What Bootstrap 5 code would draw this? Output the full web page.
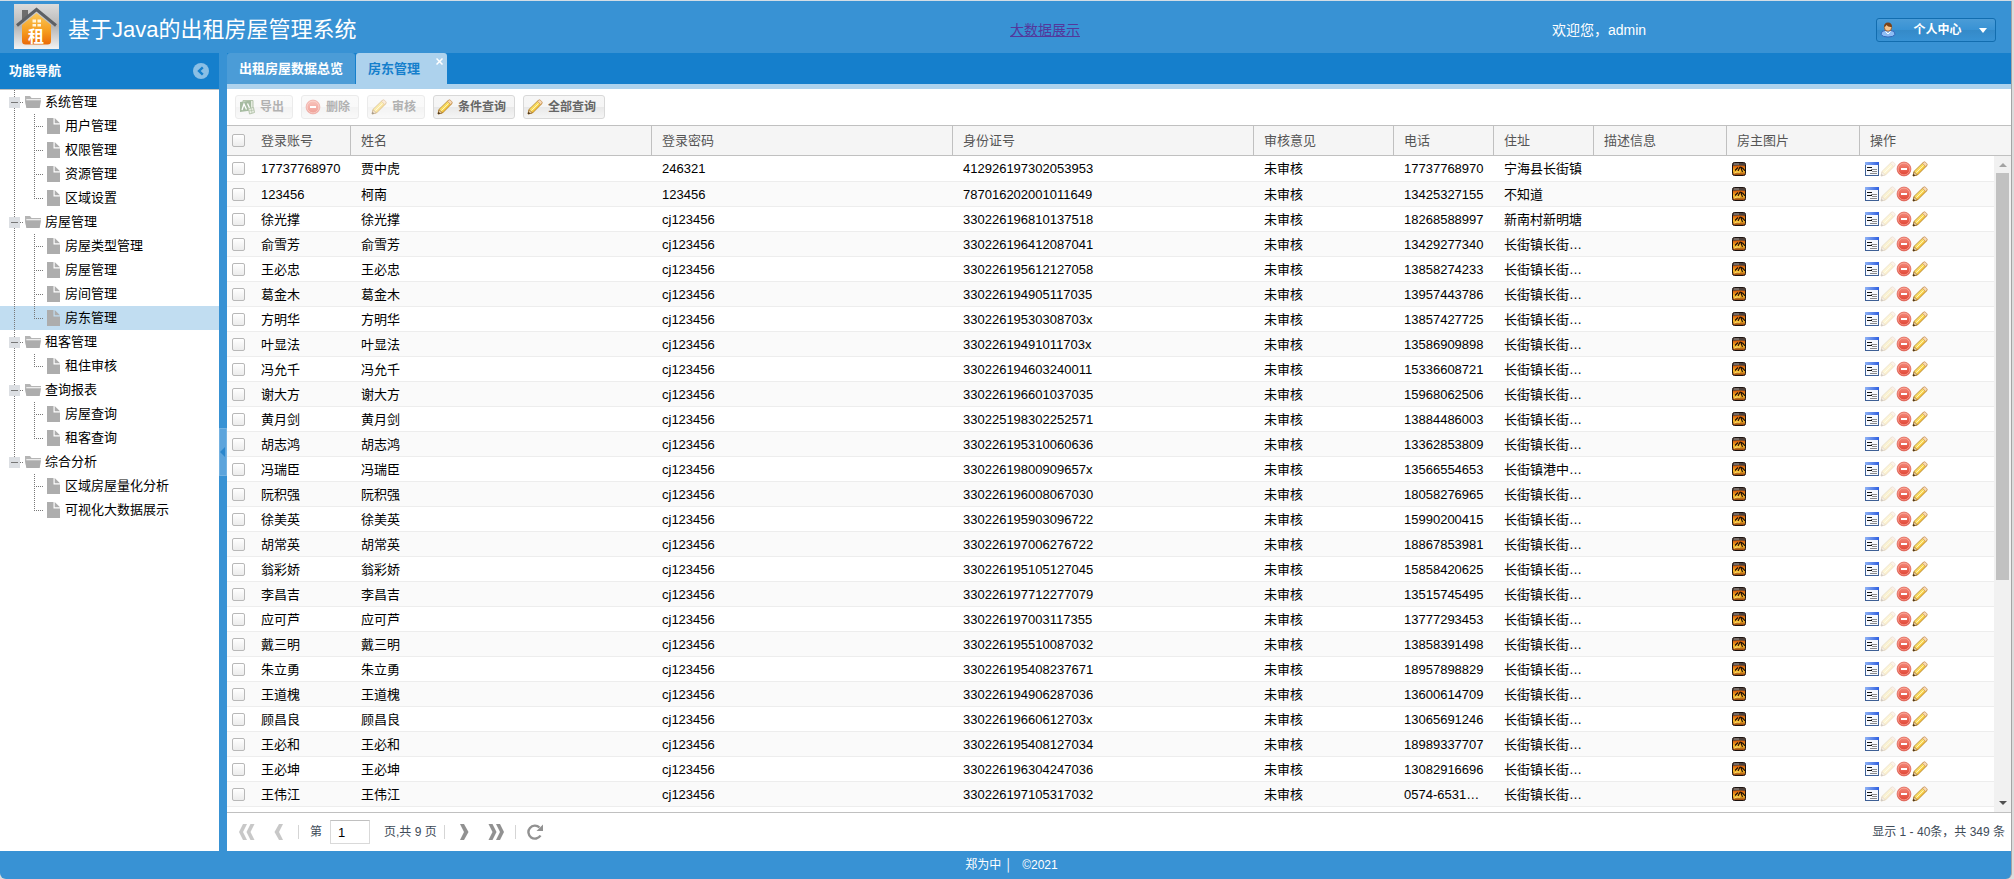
<!DOCTYPE html>
<html lang="zh-CN">
<head>
<meta charset="utf-8">
<meta name="viewport" content="width=device-width, initial-scale=1">
<title>基于Java的出租房屋管理系统</title>
<link href="https://cdn.jsdelivr.net/npm/bootstrap@5.3.0/dist/css/bootstrap.min.css" rel="stylesheet">
<style>
  :root { --base: #3892d4; --dark: #157fcc; --pale: #add2ed; --line: #c0c0c0; }
  body { font: 13px/16px "Liberation Sans", "Noto Sans CJK SC", sans-serif; color: #000; background: #dcdcdc; }
  .frame { border-top: 1px solid #d3dde5; padding-right: 2px; }
  .viewport { background: var(--base); border-right: 1px solid #a5a5a5; border-radius: 0 0 6px 6px; }

  .topbar { height: 52px; padding: 6px 15px 0 14px; color: #fff; font-size: 14px; }
  .topbar h1 { font-size: 22px; line-height: 26px; }
  .brand { gap: 9px; }
  .brand svg { margin-bottom: 7px; }
  .slot-link { width: 542px; }
  .slot-link a { color: #54389c; text-decoration-thickness: 1px; }
  .slot-user { width: 324px; }
  .btn-user { width: 120px; height: 24px; padding: 0 8px 0 3px; border: 1px solid #126daf; border-radius: 3px; color: #fff; font: bold 12px/16px "Liberation Sans", "Noto Sans CJK SC", sans-serif; background: linear-gradient(#4b9cd7, #3892d4 50%, #358ac8 51%, #3892d4); }

  .sidenav { width: 219px; }
  .sidenav-head { height: 37px; padding: 0 10px 0 9px; background: var(--dark); color: #fff; border-bottom: 1px solid var(--line); }
  .sidenav-head h2 { font-size: 13px; line-height: 16px; font-weight: bold; }
  .tree, .tree ul { list-style: none; margin: 0; padding: 0; }
  .tree a { display: flex; align-items: center; height: 24px; color: #000; text-decoration: none; }
  .tree .current { background: #c1ddf1; }
  .dots { stroke: #777; stroke-dasharray: 1 1; fill: none; shape-rendering: crispEdges; }
  .splitter { width: 8px; }
  .splitter button { width: 8px; height: 48px; border: 1px solid #74b2e1; background: #5ca4dc; }

  .tabbar { height: 31px; background: var(--dark); }
  .page-tab { height: 31px; padding: 0 12px; margin-right: 1px; border: 0; border-radius: 3px 3px 0 0; background: #4b9cd7; color: #fff; font-weight: bold; line-height: 30px; }
  .page-tab.current { position: relative; background: var(--pale); color: var(--dark); padding-right: 27px; }
  .tab-x { position: absolute; top: 5px; right: 4px; }
  .tab-strip { height: 5px; background: var(--pale); }
  .tools { height: 36px; padding: 0 8px; gap: 8px; }
  .tool { display: inline-flex; align-items: center; gap: 5px; height: 24px; padding: 0 8px 0 3px; border: 1px solid #d8d8d8; border-radius: 3px; color: #666; font-size: 12px; line-height: 16px; font-weight: bold; background: linear-gradient(#f6f6f6, #f5f5f5 50%, #e8e8e8 51%, #f5f5f5); }
  .tool:disabled { opacity: .5; border-color: #d8d8d8; color: #666; }

  .grid-table { table-layout: fixed; border-collapse: separate; border-spacing: 0; }
  .grid-table > thead > tr > th { height: 31px; padding: 0 9px 0 10px; border: solid var(--line); border-width: 1px 1px 1px 0; background: #f5f5f5; color: #555; font-weight: normal; vertical-align: middle; }
  .grid-table > tbody > tr > td { height: 25px; padding: 1px 10px 0; border-bottom: 1px solid #ededed; white-space: nowrap; overflow: hidden; vertical-align: middle; box-shadow: none; color: #000; background: #fff; }
  .grid-table > tbody > tr:nth-child(even) > td { background: #fafafa; }
  .grid-table > tbody > tr:first-child > td { height: 26px; }
  .grid-table > thead > tr > th.pick { border-right: 0; }
  .grid-table > * > tr > .pick { padding: 0 0 0 5px; }
  .grid-table > thead > tr > th:last-child { border-right: 0; }
  .grid-table > tbody > tr > td.pics { padding: 0 0 0 4px; }
  .pics a { color: inherit; }
  .c-pick { width: 24px; } .c-100 { width: 100px; } .c-140 { width: 140px; } .c-133 { width: 133px; } .c-ops { width: 151px; }
  .tick { appearance: none; display: block; width: 13px; height: 13px; margin: 0; border: 1px solid #b8b8b8; border-radius: 2px; background: linear-gradient(#fff, #ececec); }
  .vbar { position: absolute; top: 31px; right: 0; bottom: 0; width: 17px; background: #f1f1f1; }
  .vbar-thumb { width: 13px; height: 62%; margin-bottom: auto; background: #c1c1c1; }

  .pager { height: 39px; padding: 0 6px 0 8px; border-top: 1px solid var(--line); font-size: 12px; color: #404b58; }
  .pager .icon-btn { display: flex; width: 24px; height: 24px; padding: 4px; border: 0; background: none; color: #919191; }
  .pager .icon-btn:disabled { color: #c8c8c8; opacity: 1; }
  .pager .rule { width: 1px; height: 14px; margin: 0 7px; background: #d5d5d5; }
  .pager input { width: 40px; height: 24px; padding: 0 7px; margin: 0 14px 0 8px; border: 1px solid var(--line); border-color: #c0c0c0 #d9d9d9 #d9d9d9; border-radius: 0; font-size: 13px; color: #000; }
  .foot { height: 28px; color: #fff; font-size: 12px; padding-left: 12px; }
  svg { display: block; flex: none; }
</style>
</head>
<body>
<svg width="0" height="0" class="position-absolute" aria-hidden="true">
  <defs>
    <linearGradient id="gPen" x1="0" y1="0" x2="1" y2="1"><stop offset=".3" stop-color="#fff27a"/><stop offset=".7" stop-color="#efb426"/></linearGradient>
    <linearGradient id="gRed" x1="0" y1="0" x2="0" y2="1"><stop offset="0" stop-color="#f58d7e"/><stop offset="1" stop-color="#e0402f"/></linearGradient>
    <linearGradient id="gWin" x1="0" y1="0" x2="1" y2="0"><stop offset="0" stop-color="#8fb2f5"/><stop offset="1" stop-color="#2f5fe0"/></linearGradient>
    <linearGradient id="gFire" x1="0" y1="0" x2="0" y2="1"><stop offset="0" stop-color="#2a1d1a"/><stop offset=".3" stop-color="#d9640c"/><stop offset=".65" stop-color="#ffc22e"/><stop offset="1" stop-color="#8a3006"/></linearGradient>
    <linearGradient id="gLogo" x1="0" y1="0" x2="0" y2="1"><stop offset="0" stop-color="#dcdcdc"/><stop offset=".5" stop-color="#b5b5b5"/><stop offset="1" stop-color="#f3f3f3"/></linearGradient>
    <linearGradient id="gHouse" x1="0" y1="0" x2="0" y2="1"><stop offset="0" stop-color="#fbc95a"/><stop offset=".6" stop-color="#f59a1c"/><stop offset="1" stop-color="#ea6a08"/></linearGradient>
    <symbol id="i-pen" viewBox="0 0 16 16">
      <path d="M1 15l1-4.600L11 1.700q1-1 2-.2l1.600 1.600q.7 1-.1 1.900L5.500 14z" fill="url(#gPen)" stroke="#b07a22" stroke-width=".8"/>
      <path d="M10.500 2.300L11.600 1.200q1-.8 2 .1l1.100 1.200q.9 1 0 2l-1.100 1z" fill="#f9d9b4" stroke="#c08a50" stroke-width=".6"/>
      <path d="M4.300 11.800l7.400-7.300" stroke="#fffbd0" stroke-width="1"/>
      <path d="M2.200 10.800l3 3L1 15z" fill="#f3d8ac" stroke="#8a5a20" stroke-width=".6"/>
      <path d="M1 15l.5-2.200 1.800 1.700z" fill="#332415"/>
    </symbol>
    <symbol id="i-minus" viewBox="0 0 16 16">
      <circle cx="8" cy="8" r="6.900" fill="url(#gRed)" stroke="#dd5f53" stroke-width=".8"/>
      <circle cx="8" cy="8" r="5.900" fill="none" stroke="#f9b4a8" stroke-width=".7"/>
      <rect x="5" y="7" width="6" height="2" fill="#fff"/>
    </symbol>
    <symbol id="i-form" viewBox="0 0 16 16">
      <rect x="1.500" y="2.500" width="13" height="12" fill="#f7f9fe" stroke="#3d5f95"/>
      <path d="M1 1h14v3H1z" fill="url(#gWin)"/>
      <g shape-rendering="crispEdges"><path d="M3 6.500h5M3 9.500h5" stroke="#111"/><path d="M7 8.500h6M8 10.500h5M6 12.500h7" stroke="#8a8a8a"/></g>
    </symbol>
    <symbol id="i-photo" viewBox="0 0 16 16">
      <rect x="1.500" y="1.500" width="13" height="13" rx="2" fill="url(#gFire)" stroke="#1b1210"/>
      <path d="M2 2.500q6-1 12 0v2.300q-6-1.300-12 0z" fill="#4b4441"/>
      <path d="M3 3h5" stroke="#b5aca6" stroke-width=".8"/>
      <path d="M4 9.500l3-3M7 10L9 6M9 6q3 .5 5 4M10 7l1.500 4" stroke="#1b0d06" stroke-width="1.100" fill="none"/>
      <path d="M3 12.200q3-2 6-1" stroke="#ffe368" stroke-width="1" fill="none"/>
    </symbol>
    <symbol id="i-excel" viewBox="0 0 16 16">
      <path d="M4 1.500h10v10H4z" fill="#cfdcc3" stroke="#6d8b5c"/>
      <path d="M1 3l11-1.500v10L1 13z" fill="#4f7a45"/>
      <path d="M3 11l2-6 2.500 5.500M8.500 4.500L11 10" stroke="#fff" stroke-width="1.300" fill="none"/>
      <path d="M9.500 9.500l5-1 1 5-5 1.500z" fill="#dbe5d0" stroke="#6d8b5c"/>
      <path d="M10 12l5-1M12 9l1 5" stroke="#6d8b5c" stroke-width=".8"/>
    </symbol>
    <symbol id="i-folder" viewBox="0 0 16 12"><path d="M0 0h5l1.500 2H16v1.300H1.300v8L0 3.500z" fill="#b5b5b5"/><path d="M0 4.300h16L14.700 12H1.300z" fill="#adadad"/></symbol>
    <symbol id="i-file" viewBox="0 0 13 16"><path d="M0 0h6.500v6.500H13V16H0z" fill="#adadad"/><path d="M7.700 0L13 5.300H7.700z" fill="#adadad"/></symbol>
    <symbol id="t-group" viewBox="0 0 45 24">
      <path class="dots" d="M14.500 0v24M20 12.500h4"/>
      <rect x="9" y="7" width="11" height="11" fill="#dcdfe3"/><path d="M11 12.500h7" stroke="#777"/>
      <use href="#i-folder" x="25" y="6" width="16" height="12"/>
    </symbol>
    <symbol id="t-group-end" viewBox="0 0 45 24">
      <path class="dots" d="M14.500 0v12M20 12.500h4"/>
      <rect x="9" y="7" width="11" height="11" fill="#dcdfe3"/><path d="M11 12.500h7" stroke="#777"/>
      <use href="#i-folder" x="25" y="6" width="16" height="12"/>
    </symbol>
    <symbol id="t-item" viewBox="0 0 65 24"><path class="dots" d="M14.500 0v24M34.500 0v24M36 12.500h7"/><use href="#i-file" x="47" y="4" width="13" height="16"/></symbol>
    <symbol id="t-item-end" viewBox="0 0 65 24"><path class="dots" d="M14.500 0v24M34.500 0v13M36 12.500h7"/><use href="#i-file" x="47" y="4" width="13" height="16"/></symbol>
    <symbol id="t-tail" viewBox="0 0 65 24"><path class="dots" d="M34.500 0v24M36 12.500h7"/><use href="#i-file" x="47" y="4" width="13" height="16"/></symbol>
    <symbol id="t-tail-end" viewBox="0 0 65 24"><path class="dots" d="M34.500 0v13M36 12.500h7"/><use href="#i-file" x="47" y="4" width="13" height="16"/></symbol>
  </defs>
</svg>

<div class="frame vh-100">
<div class="viewport h-100 d-flex flex-column overflow-hidden">
  <header class="topbar d-flex align-items-center">
    <div class="brand d-flex align-items-center flex-grow-1">
      <svg width="45" height="45" viewBox="0 0 45 45" role="img" aria-label="租">
        <rect width="45" height="45" fill="url(#gLogo)"/>
        <path d="M8 6h6v7l-6 5z" fill="#6d6d6d"/>
        <path d="M8 21L22.500 9 37 21v16q0 3.500-3.500 3.500h-22Q8 40.500 8 37z" fill="url(#gHouse)"/>
        <path d="M3 21.500L22.500 5.500 42 21.500" fill="none" stroke="#5d6064" stroke-width="3" stroke-linejoin="miter"/>
        <path d="M18.500 15.500h3.500v3h-3.500zM23.500 15.500H27v3h-3.500zM18.500 20h3.500v2.500h-3.500zM23.500 20H27v2.500h-3.500z" fill="#fff6df"/>
        <text x="22" y="38" font-size="16" font-weight="bold" fill="#fff" text-anchor="middle">租</text>
      </svg>
      <h1 class="m-0 fw-normal">基于Java的出租房屋管理系统</h1>
    </div>
    <div class="slot-link"><a href="#">大数据展示</a></div>
    <div class="slot-user">欢迎您，admin</div>
    <button type="button" class="btn btn-user d-flex align-items-center justify-content-between">
      <svg width="16" height="16" viewBox="0 0 16 16">
        <path d="M1 12.500Q1 8.500 5 8.500h6q4 0 4 4-1.500 2.500-7 2.500T1 12.500z" fill="#8dbdf5" stroke="#2f62b5" stroke-width=".9"/>
        <path d="M5.500 9.500L8 12l2.500-2.500" stroke="#fff" fill="none"/>
        <circle cx="8" cy="5.500" r="3.700" fill="#f5c48d" stroke="#8a5122" stroke-width=".8"/>
        <path d="M4 5q0-4.500 4-4.500T12 5q-4 .5-5.500-2Q6 4.500 4 5z" fill="#7a4319"/>
      </svg>
      <span>个人中心</span>
      <svg width="8" height="5" viewBox="0 0 8 5"><path d="M0 0h8L4 5z" fill="#fff"/></svg>
    </button>
  </header>

  <div class="d-flex flex-grow-1 overflow-hidden">
    <nav class="sidenav flex-shrink-0 bg-white" aria-label="功能导航">
      <div class="sidenav-head d-flex align-items-center justify-content-between">
        <h2 class="m-0">功能导航</h2>
        <button type="button" class="btn p-0 border-0" aria-label="收起">
          <svg width="16" height="16" viewBox="0 0 16 16"><circle cx="8" cy="8" r="8" fill="#8abfe5"/><path d="M9.800 4.300L6 8l3.800 3.700" fill="none" stroke="#157fcc" stroke-width="2.400"/></svg>
        </button>
      </div>
      <ul class="tree">
        <li><a href="#"><svg width="45" height="24"><use href="#t-group"/></svg>系统管理</a>
          <ul>
            <li><a href="#"><svg width="65" height="24"><use href="#t-item"/></svg>用户管理</a></li>
            <li><a href="#"><svg width="65" height="24"><use href="#t-item"/></svg>权限管理</a></li>
            <li><a href="#"><svg width="65" height="24"><use href="#t-item"/></svg>资源管理</a></li>
            <li><a href="#"><svg width="65" height="24"><use href="#t-item-end"/></svg>区域设置</a></li>
          </ul>
        </li>
        <li><a href="#"><svg width="45" height="24"><use href="#t-group"/></svg>房屋管理</a>
          <ul>
            <li><a href="#"><svg width="65" height="24"><use href="#t-item"/></svg>房屋类型管理</a></li>
            <li><a href="#"><svg width="65" height="24"><use href="#t-item"/></svg>房屋管理</a></li>
            <li><a href="#"><svg width="65" height="24"><use href="#t-item"/></svg>房间管理</a></li>
            <li><a href="#" class="current"><svg width="65" height="24"><use href="#t-item-end"/></svg>房东管理</a></li>
          </ul>
        </li>
        <li><a href="#"><svg width="45" height="24"><use href="#t-group"/></svg>租客管理</a>
          <ul>
            <li><a href="#"><svg width="65" height="24"><use href="#t-item-end"/></svg>租住审核</a></li>
          </ul>
        </li>
        <li><a href="#"><svg width="45" height="24"><use href="#t-group"/></svg>查询报表</a>
          <ul>
            <li><a href="#"><svg width="65" height="24"><use href="#t-item"/></svg>房屋查询</a></li>
            <li><a href="#"><svg width="65" height="24"><use href="#t-item-end"/></svg>租客查询</a></li>
          </ul>
        </li>
        <li><a href="#"><svg width="45" height="24"><use href="#t-group-end"/></svg>综合分析</a>
          <ul>
            <li><a href="#"><svg width="65" height="24"><use href="#t-tail"/></svg>区域房屋量化分析</a></li>
            <li><a href="#"><svg width="65" height="24"><use href="#t-tail-end"/></svg>可视化大数据展示</a></li>
          </ul>
        </li>
      </ul>
    </nav>

    <div class="splitter flex-shrink-0 d-flex align-items-center">
      <button type="button" class="p-0" aria-label="收起导航"><svg width="6" height="10" viewBox="0 0 6 10"><path d="M5 0v10L0 5z" fill="#2a86cc"/></svg></button>
    </div>

    <main class="flex-grow-1 d-flex flex-column bg-white overflow-hidden">
      <div class="tabbar d-flex">
        <button type="button" class="page-tab">出租房屋数据总览</button>
        <button type="button" class="page-tab current">房东管理<svg class="tab-x" width="7" height="7" viewBox="0 0 7 7"><path d="M.5.500l6 6M6.500.500l-6 6" stroke="#fff" stroke-width="1.500"/></svg></button>
      </div>
      <div class="tab-strip"></div>
      <div class="tools d-flex align-items-center">
        <button type="button" class="tool" disabled><svg width="16" height="16"><use href="#i-excel"/></svg>导出</button>
        <button type="button" class="tool" disabled><svg width="16" height="16"><use href="#i-minus"/></svg>删除</button>
        <button type="button" class="tool" disabled><svg width="16" height="16"><use href="#i-pen"/></svg>审核</button>
        <button type="button" class="tool"><svg width="16" height="16"><use href="#i-pen"/></svg>条件查询</button>
        <button type="button" class="tool"><svg width="16" height="16"><use href="#i-pen"/></svg>全部查询</button>
      </div>

      <div class="position-relative flex-grow-1 overflow-hidden">
        <table class="table grid-table mb-0">
          <colgroup><col class="c-pick"><col class="c-100"><col><col><col><col class="c-140"><col class="c-100"><col class="c-100"><col class="c-133"><col class="c-133"><col class="c-ops"></colgroup>
          <thead>
            <tr><th class="pick"><input type="checkbox" class="tick" aria-label="全选"></th><th>登录账号</th><th>姓名</th><th>登录密码</th><th>身份证号</th><th>审核意见</th><th>电话</th><th>住址</th><th>描述信息</th><th>房主图片</th><th>操作</th></tr>
          </thead>
          <tbody id="owners"></tbody>
        </table>
        <div class="vbar d-flex flex-column align-items-center">
          <svg width="17" height="17" viewBox="0 0 17 17"><path d="M5 11h8L9 7z" fill="#a3a3a3"/></svg>
          <div class="vbar-thumb"></div>
          <svg width="17" height="17" viewBox="0 0 17 17"><path d="M5 6h8l-4 4z" fill="#505050"/></svg>
        </div>
      </div>

      <div class="pager d-flex align-items-center flex-shrink-0">
        <button type="button" class="icon-btn" disabled aria-label="首页"><svg width="16" height="16" viewBox="0 0 16 16"><path d="M8 0L4 8l4 8H4L0 8l4-8zM15.500 0l-4 8 4 8h-4l-4-8 4-8z" fill="currentColor"/></svg></button>
        <button type="button" class="icon-btn ms-2" disabled aria-label="上一页"><svg width="16" height="16" viewBox="0 0 16 16"><path d="M12 0L8 8l4 8H8L3.500 8 8 0z" fill="currentColor"/></svg></button>
        <span class="rule"></span>
        <label for="page" class="ms-1">第</label>
        <input type="text" id="page" value="1">
        <span>页,共 9 页</span>
        <span class="rule"></span>
        <button type="button" class="icon-btn" aria-label="下一页"><svg width="16" height="16" viewBox="0 0 16 16"><path d="M4 0l4 8-4 8h4l4.500-8L8 0z" fill="currentColor"/></svg></button>
        <button type="button" class="icon-btn ms-2" aria-label="末页"><svg width="16" height="16" viewBox="0 0 16 16"><path d="M.5 0l4 8-4 8h4l4-8-4-8zM8 0l4 8-4 8h4l4-8-4-8z" fill="currentColor"/></svg></button>
        <span class="rule"></span>
        <button type="button" class="icon-btn" aria-label="刷新"><svg width="16" height="16" viewBox="0 0 16 16"><path d="M13.500 11.500A6.500 6.500 0 1 1 12.500 3.500" fill="none" stroke="currentColor" stroke-width="2.400"/><path d="M16 .5V7H9.500z" fill="currentColor"/></svg></button>
        <span class="ms-auto">显示 1 - 40条，共 349 条</span>
      </div>
    </main>
  </div>

  <footer class="foot d-flex align-items-center justify-content-center flex-shrink-0">郑为中&nbsp;│&nbsp;&nbsp;&nbsp;©2021</footer>
</div>
</div>

<script>
  // [account, name, password, id number, phone, address]; later rows share account = name
  const pw = 'cj123456', addr = '长街镇长街…';
  const owners = [
    ['17737768970', '贾中虎', '246321', '412926197302053953', '17737768970', '宁海县长街镇'],
    ['123456', '柯南', '123456', '787016202001011649', '13425327155', '不知道'],
    ['徐光撑', '徐光撑', pw, '330226196810137518', '18268588997', '新南村新明塘'],
    ...[
      ['俞雪芳', '330226196412087041', '13429277340'],
      ['王必忠', '330226195612127058', '13858274233'],
      ['葛金木', '330226194905117035', '13957443786'],
      ['方明华', '33022619530308703x', '13857427725'],
      ['叶显法', '33022619491011703x', '13586909898'],
      ['冯允千', '330226194603240011', '15336608721'],
      ['谢大方', '330226196601037035', '15968062506'],
      ['黄月剑', '330225198302252571', '13884486003'],
      ['胡志鸿', '330226195310060636', '13362853809'],
      ['冯瑞臣', '33022619800909657x', '13566554653', '长街镇港中…'],
      ['阮积强', '330226196008067030', '18058276965'],
      ['徐美英', '330226195903096722', '15990200415'],
      ['胡常英', '330226197006276722', '18867853981'],
      ['翁彩娇', '330226195105127045', '15858420625'],
      ['李昌吉', '330226197712277079', '13515745495'],
      ['应可芦', '330226197003117355', '13777293453'],
      ['戴三明', '330226195510087032', '13858391498'],
      ['朱立勇', '330226195408237671', '18957898829'],
      ['王道槐', '330226194906287036', '13600614709'],
      ['顾昌良', '33022619660612703x', '13065691246'],
      ['王必和', '330226195408127034', '18989337707'],
      ['王必坤', '330226196304247036', '13082916696'],
      ['王伟江', '330226197105317032', '0574-6531…']
    ].map(([name, id, phone, place]) => [name, name, pw, id, phone, place || addr])
  ];
  const icon = (id, label, cls = '') =>
    `<a href="#" aria-label="${label}" class="${cls}"><svg width="16" height="16"><use href="#${id}"/></svg></a>`;
  document.getElementById('owners').innerHTML = owners.map(([account, name, pass, id, phone, place]) => `
    <tr><td class="pick"><input type="checkbox" class="tick" aria-label="${name}"></td>
    <td>${account}</td><td>${name}</td><td>${pass}</td><td>${id}</td><td>未审核</td><td>${phone}</td><td>${place}</td><td></td>
    <td class="pics">${icon('i-photo', '图片')}</td>
    <td class="pics"><div class="d-flex">${icon('i-form', '详情')}${icon('i-pen', '审核', 'opacity-25')}${icon('i-minus', '删除')}${icon('i-pen', '编辑')}</div></td></tr>`).join('');
</script>
<script src="https://cdn.jsdelivr.net/npm/bootstrap@5.3.0/dist/js/bootstrap.bundle.min.js"></script>
</body>
</html>
